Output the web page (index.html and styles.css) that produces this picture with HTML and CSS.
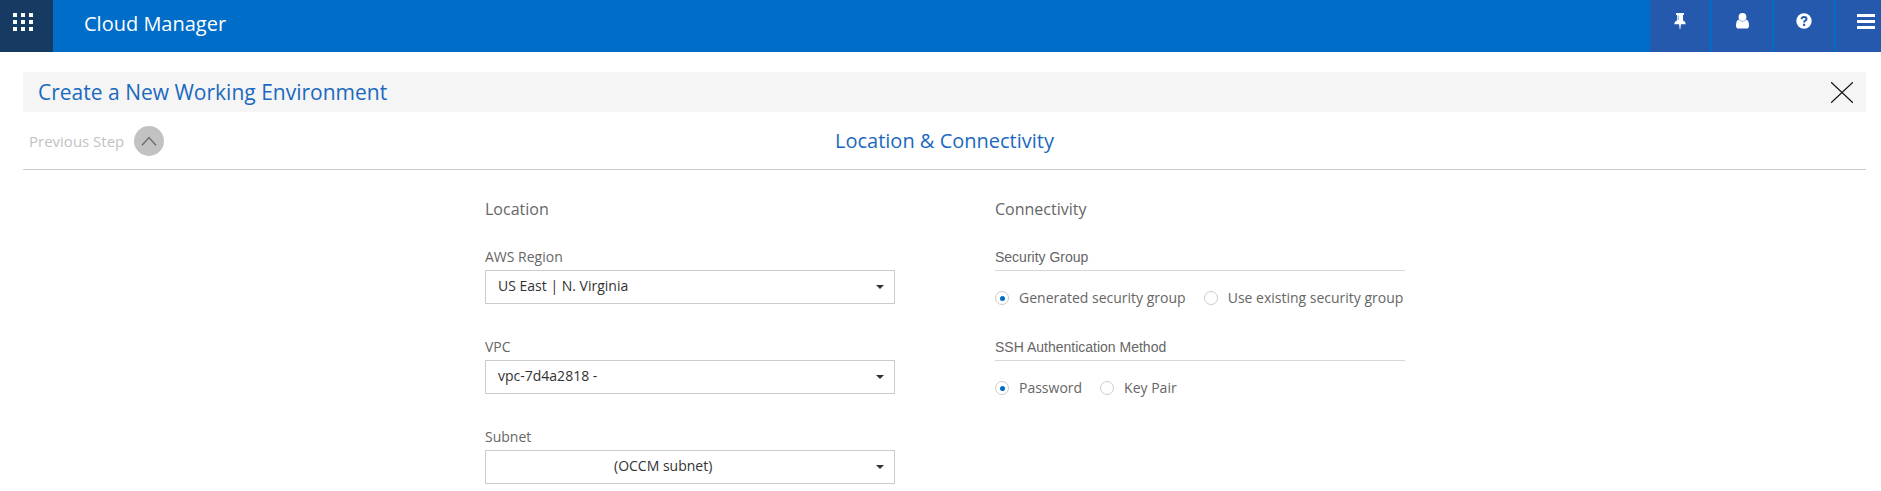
FILE: index.html
```html
<!DOCTYPE html>
<html lang="en">
<head>
<meta charset="utf-8">
<title>Cloud Manager</title>
<link rel="stylesheet" href="styles.css">
</head>
<body>
<header class="topbar">
  <div class="apps">
    <svg width="20" height="18" viewBox="0 0 20 18" fill="#fff" shape-rendering="crispEdges"><path d="M0 0h4v4H0zM8 0h4v4H8zM16 0h4v4h-4zM0 7h4v4H0zM8 7h4v4H8zM16 7h4v4h-4zM0 14h4v4H0zM8 14h4v4H8zM16 14h4v4h-4z"/></svg>
  </div>
  <div class="brand">Cloud Manager</div>
  <nav class="tools">
    <div class="tool"><svg width="12" height="17" viewBox="0 0 12 17" fill="#fff"><path d="M2 .5Q2 0 2.500 0h7q.5 0 .5.500V1.500q0 .5-.5.500H9v5.500q2.500 1 2.700 3.200 0 .5-.5.500H6.900L6.300 16.300H5.700L5.100 11.200H.8q-.5 0-.5-.5Q.5 8.500 3 7.500V2h-.5Q2 2 2 1.500z"/><path d="M4.200 2.500v4.500" stroke="#2459ae" stroke-width=".6"/></svg></div>
    <div class="tool"><svg width="13" height="16" viewBox="0 0 13 16" fill="#fff"><ellipse cx="6.500" cy="4" rx="3.900" ry="4"/><path d="M2.700 6.500Q0 7.500 0 12.700q0 2.800 2.600 2.800h7.800q2.600 0 2.600-2.800 0-5.200-2.700-6.200Q8.800 8.400 6.500 8.400T2.700 6.500z"/></svg></div>
    <div class="tool"><svg width="16" height="16" viewBox="0 0 16 16"><circle cx="8" cy="8" r="7.700" fill="#fff"/><path d="M5.500 6Q5.800 3.900 8 3.900q2.500 0 2.500 2 0 1.200-1.200 1.800-1.200.5-1.200 1.900" fill="none" stroke="#2459ae" stroke-width="2"/><path d="M7 10.700h2.200v2.200H7z" fill="#2459ae"/></svg></div>
    <div class="tool menu"><svg width="18" height="15" viewBox="0 0 18 15" fill="#fff" shape-rendering="crispEdges"><path d="M0 0h18v3H0zM0 6h18v3H0zM0 12h18v3H0z"/></svg></div>
  </nav>
</header>
<main class="page">
  <div class="titlebar">
    <h1>Create a New Working Environment</h1>
    <svg class="close" width="22" height="21" viewBox="0 0 22 21" fill="none" stroke="#111" stroke-width="1.300"><path d="M0 .2 22 20.800M22 .2 0 20.800"/></svg>
  </div>
  <div class="stepbar">
    <div class="previous">
      <span>Previous Step</span>
      <svg width="30" height="30" viewBox="0 0 30 30"><circle cx="15" cy="15" r="15" fill="#c2c2c2"/><path d="M8 19.200 15 11.600l7 7.600" fill="none" stroke="#666" stroke-width="1.300"/></svg>
    </div>
    <h2>Location &amp; Connectivity</h2>
  </div>
  <div class="form">
    <section class="column">
      <h3>Location</h3>
      <div class="field"><div class="label">AWS Region</div><div class="select"><span>US East | N. Virginia</span><i class="caret"></i></div></div>
      <div class="field"><div class="label">VPC</div><div class="select"><span>vpc-7d4a2818 -</span><i class="caret"></i></div></div>
      <div class="field"><div class="label">Subnet</div><div class="select subnet"><span>(OCCM subnet)</span><i class="caret"></i></div></div>
    </section>
    <section class="column">
      <h3>Connectivity</h3>
      <div class="field"><div class="label group">Security Group</div>
        <div class="options"><div class="option"><i class="radio on"></i><span>Generated security group</span></div><div class="option"><i class="radio"></i><span>Use existing security group</span></div></div></div>
      <div class="field"><div class="label group">SSH Authentication Method</div>
        <div class="options"><div class="option"><i class="radio on"></i><span>Password</span></div><div class="option"><i class="radio"></i><span>Key Pair</span></div></div></div>
    </section>
  </div>
</main>
</body>
</html>
```
FILE: styles.css
```css
* { box-sizing: border-box; }
body { margin: 0; background: #fff; color: #666; font: 14px/20px "Open Sans", sans-serif; }
svg { display: block; flex: none; }
h1, h2, h3 { margin: 0; font-weight: 400; }
.topbar { display: flex; height: 52px; background: #006dc9; }
.apps { width: 53px; padding: 13px 0 0 13px; background: #173a62; }
.brand { flex: 1; padding: 10px 0 0 31px; color: #fff; font-size: 20px; line-height: 28px; }
.tools { display: flex; gap: 2px; }
.tool { display: flex; justify-content: center; width: 60px; padding-top: 13px; background: #2459ae; }
.menu { justify-content: flex-start; width: 45px; padding: 14px 0 0 21px; }
.page { padding: 20px 15px 0 23px; }
.titlebar { display: flex; align-items: center; justify-content: space-between; height: 40px; padding: 0 13px 0 15px; background: #f5f5f5; }
.titlebar h1 { color: #1b69be; font-size: 21px; line-height: 30px; }
.stepbar { display: grid; grid-template-columns: 1fr auto 1fr; align-items: center; height: 58px; border-bottom: 1px solid #ccc; }
.previous { display: flex; align-items: center; gap: 10px; padding-left: 6px; color: #c2c2c2; font-size: 15px; }
.stepbar h2 { color: #1b69be; font-size: 20px; line-height: 28px; }
.form { display: flex; gap: 100px; padding: 27px 0 0 462px; }
.column { width: 410px; }
.column h3 { height: 50px; font-size: 16px; line-height: 24px; }
.field { height: 90px; }
.field:last-child { height: auto; }
.label { height: 23px; line-height: 20px; }
.select { display: flex; align-items: center; justify-content: space-between; height: 34px; padding: 0 10px 0 12px; border: 1px solid #ccc; color: #333; }
.select span { padding-bottom: 2px; }
.subnet { padding-left: 128px; }
.caret { border: 4px solid transparent; border-top-color: #333; border-bottom: 0; }
.group { height: 24px; border-bottom: 1px solid #d6d6d6; font-family: "Liberation Sans", Arial, sans-serif; }
.options { display: flex; gap: 18px; padding-top: 17px; }
.option { display: flex; align-items: center; gap: 10px; }
.radio { display: grid; place-items: center; width: 14px; height: 14px; border: 1px solid #ccc; border-radius: 50%; }
.on::after { content: ""; width: 5px; height: 5px; border-radius: 50%; background: #006dc9; }
```
